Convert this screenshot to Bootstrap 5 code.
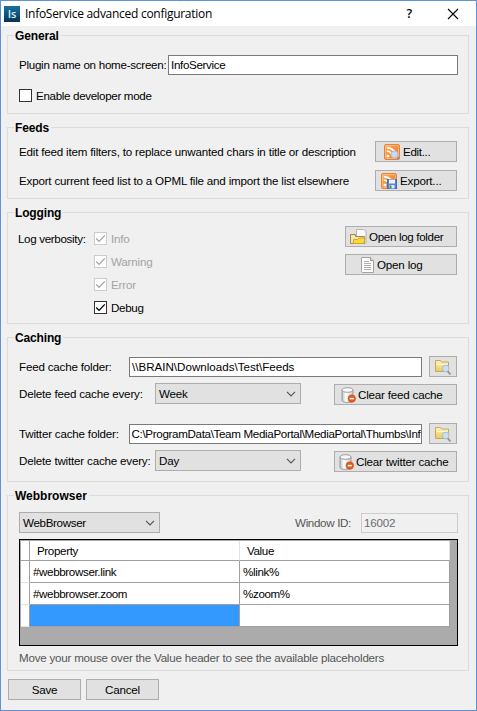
<!DOCTYPE html>
<html lang="en">
<head>
<meta charset="utf-8">
<title>InfoService advanced configuration</title>
<link href="https://cdn.jsdelivr.net/npm/bootstrap@5.3.0/dist/css/bootstrap.min.css" rel="stylesheet">
<style>
body{font-family:"Liberation Sans",Arial,sans-serif;font-size:11.6px;line-height:16px;letter-spacing:-.19px;color:#000;background:#f0f0f0}
.window{width:477px;height:711px;border:1px solid #5f93d8;background:#f0f0f0}
.titlebar{height:25px;padding:0 17px 0 3px}
.win-title{font-family:"Open Sans",sans-serif;font-size:12px;letter-spacing:-.28px;margin-left:5px}
.help{font:600 12.5px/16px "Open Sans",sans-serif;margin-right:35px}
.group{margin:13px 7px 0 6px;border:1px solid #dcdcdc;padding:0 11px}
.g-general{margin-top:9px;height:79px}
.g-feeds{height:72px}
.g-logging{height:112px}
.g-caching{height:145px}
.g-web{height:176px}
.legend{font-size:12px;font-weight:700;line-height:16px;width:max-content;letter-spacing:-.15px;margin:-8px 0 0 -5px;padding:0 2px 0 1px;background:#f0f0f0}
.field{height:20px;border:1px solid #7a7a7a;background:#fff;padding:1px 2px;white-space:nowrap;overflow:hidden;line-height:16px}
.field.off{border:1px solid #ccc;background:#f0f0f0;color:#6d6d6d;width:97px;margin-right:-1px}
.f-name{margin-right:-1px}
.wbtn{height:21px;border:1px solid #adadad;border-radius:0;background:#e1e1e1;color:#000;font-size:11.6px;line-height:17px;padding:1px 0;letter-spacing:inherit;gap:3px;white-space:nowrap}
.wbtn:hover{background:#e5f1fb;border-color:#0078d7}
.wbtn svg{flex:none}
.b-edit{width:82px;padding-left:8px}
.b-export{width:82px;padding-left:5px}
.b-logdir{width:112px;padding-left:4px;gap:2px}
.b-log{width:112px;padding-left:13px;gap:2px}
.b-clear1{width:123px;padding-left:6px;gap:1px}
.b-clear2{width:123px;padding-left:4px;gap:1px}
.b-browse{width:28px;margin-left:7px}
.b-foot{width:73px}
.wsel{height:21px;border:1px solid #adadad;background:#e1e1e1;padding:0 4px 0 3px}
.s-every{width:146px}
.s-web{width:141px}
.box{width:13px;height:13px;border:1px solid #333;background:#fff;flex:none}
.box svg{display:block}
.check{height:13px;gap:4px}
.off-check{color:#a3a3a3}
.off-check .box{border-color:#ccc}
.row-21{height:21px}
.name-row{margin-top:11px}
.dev-row{margin-top:14px}
.first-feed{margin-top:5px}
.log-label{width:76px;margin:10px 0 0 -1px}
.log-checks{gap:10px;margin-top:11px}
.log-btns{gap:7px;margin-top:5px}
.cache-1{margin-top:10px}
.cache-2{margin-top:6px}
.cache-3{margin-top:19px}
.cache-2 .wbtn{margin-top:2px}
.cache-2 .lbl-every{margin-top:1px}
.web-row{margin-top:8px}
.ls-tight{letter-spacing:-.33px}
.ls-none{letter-spacing:0}
.lbl-plugin{width:149px;letter-spacing:-.27px}
.lbl-folder{width:110px}
.lbl-every{width:136px}
.winid{color:#555;letter-spacing:-.33px;margin-right:10px}
.dgrid{width:439px;height:107px;margin-top:6px;border:1px solid #000;background:#ababab;padding:1px 0 0 1px}
.dgrid table{width:429px;table-layout:fixed;border-collapse:separate;border-spacing:0;background:#fff;letter-spacing:-.36px;line-height:16px}
.dgrid th,.dgrid td{padding:0 0 0 3px;height:22px;border-right:1px solid #a0a0a0;border-bottom:1px solid #a0a0a0;font-weight:400}
.dgrid th{height:20px;padding-left:7px;border-right-color:#e2e2e2}
.dgrid .rowhead{width:9px;padding:0;border-bottom-color:#e2e2e2;border-right-color:#a0a0a0}
.dgrid th.rowhead{border-bottom-color:#a0a0a0}
.dgrid .picked{background:#3399ff}
.c-head{width:9px}
.c-prop{width:210px}
.note{color:#555;letter-spacing:-.22px;margin-top:4px}
.foot{margin:8px 0 0 7px;gap:5px}
</style>
<script src="https://cdn.jsdelivr.net/npm/bootstrap@5.3.0/dist/js/bootstrap.bundle.min.js"></script>
</head>
<body>
<svg class="position-absolute" width="0" height="0" aria-hidden="true">
<defs>
<linearGradient id="org" x1="0" y1="0" x2="1" y2="1"><stop offset="0" stop-color="#ffab55"/><stop offset="1" stop-color="#f0761f"/></linearGradient>
<linearGradient id="yel" x1="0" y1="0" x2="0" y2="1"><stop offset="0" stop-color="#fff3b8"/><stop offset="1" stop-color="#ecc95a"/></linearGradient>
<linearGradient id="can" x1="0" y1="0" x2="1" y2="0"><stop offset="0" stop-color="#bdbdbd"/><stop offset=".35" stop-color="#fff"/><stop offset="1" stop-color="#c8c8c8"/></linearGradient>
<linearGradient id="blu" x1="0" y1="0" x2="0" y2="1"><stop offset="0" stop-color="#17749f"/><stop offset="1" stop-color="#063456"/></linearGradient>
</defs>
<symbol id="rss" viewBox="0 0 16 16"><rect x=".5" y=".5" width="15" height="15" rx="1.5" fill="url(#org)" stroke="#e8813a"/><rect x="1.5" y="1.5" width="13" height="13" rx="1" fill="none" stroke="#ffcf9c" stroke-opacity=".6"/><circle cx="4" cy="12" r="1.5" fill="#fff"/><path d="M2.8 7.2a6 6 0 0 1 6 6M2.8 3.6a9.6 9.6 0 0 1 9.6 9.6" fill="none" stroke="#fff" stroke-width="1.8"/></symbol>
<symbol id="folder" viewBox="0 0 16 16"><path d="M.5 12.5v-11h5l1 1.5h7v9.500z" fill="url(#yel)" stroke="#c2a860"/><path d="M1.500 5.500h11" stroke="#fffbd8"/><path d="m12.500 12.200 2.500 2.600" stroke="#9a9088" stroke-width="1.800" stroke-linecap="round"/><circle cx="10.700" cy="9.500" r="3.300" fill="#c5e1fb" fill-opacity=".93" stroke="#9dbfe2"/></symbol>
<symbol id="db" viewBox="0 0 16 16"><path d="M1 3.200v10c0 3 11 3 11 0v-10z" fill="url(#can)" stroke="#999"/><ellipse cx="6.500" cy="3" rx="5.500" ry="2.300" fill="#f8f8f8" stroke="#999"/><circle cx="10.800" cy="11.600" r="3.700" fill="#e65c1a" stroke="#c34a10" stroke-width=".7"/><path d="M8.700 11.600h4.200" stroke="#fff" stroke-width="1.500"/></symbol>
<symbol id="tick" viewBox="0 0 11 11"><path d="m1.200 5.500 2.900 2.900L9.800 2.400" fill="none" stroke="currentColor" stroke-width="1.300"/></symbol>
<symbol id="chev" viewBox="0 0 10 6"><path d="m1 .8 4 4 4-4" fill="none" stroke="#555" stroke-width="1.200"/></symbol>
</svg>

<main class="window d-flex flex-column overflow-hidden">
  <header class="titlebar d-flex align-items-center bg-white flex-shrink-0">
    <svg width="16" height="16" viewBox="0 0 16 16"><rect width="16" height="16" fill="url(#blu)"/><text x="8" y="12.300" text-anchor="middle" font-family="Open Sans" font-size="11" font-weight="600" letter-spacing="0" fill="#d9f0fa">Is</text></svg>
    <span class="win-title">InfoService advanced configuration</span>
    <span class="help ms-auto">?</span>
    <svg width="12" height="12" viewBox="0 0 12 12"><path d="m1 1 10 10M11 1 1 11" stroke="#000" stroke-width="1.100"/></svg>
  </header>

  <section class="group g-general">
    <h2 class="legend">General</h2>
    <div class="name-row d-flex align-items-center">
      <label class="lbl-plugin">Plugin name on home-screen:</label>
      <div class="field f-name flex-fill ls-tight">InfoService</div>
    </div>
    <div class="check dev-row d-flex align-items-center"><span class="box"></span><span class="ls-tight">Enable developer mode</span></div>
  </section>

  <section class="group g-feeds">
    <h2 class="legend">Feeds</h2>
    <div class="first-feed d-flex align-items-center justify-content-between"><span>Edit feed item filters, to replace unwanted chars in title or description</span>
      <button class="btn wbtn b-edit d-flex align-items-center"><svg width="16" height="16"><use href="#rss"/><path d="m13 13 2 2" stroke="#8c8c94" stroke-width="1.600"/><circle cx="10.500" cy="10.500" r="3.500" fill="#c5dcf4" stroke="#a3c0e2"/></svg><span class="ls-tight">Edit...</span></button></div>
    <div class="d-flex align-items-center justify-content-between mt-2"><span>Export current feed list to a OPML file and import the list elsewhere</span>
      <button class="btn wbtn b-export d-flex align-items-center"><svg width="16" height="16"><use href="#rss"/><rect x="6.500" y="6.500" width="9" height="9" fill="#5b84cf" stroke="#456cb5"/><rect x="8" y="6.500" width="6" height="4" fill="#eef4fd"/><rect x="8.500" y="12" width="5" height="3.500" fill="#dce5f4"/><rect x="9" y="12.500" width="1.500" height="3" fill="#3d8758"/></svg><span>Export...</span></button></div>
  </section>

  <section class="group g-logging">
    <h2 class="legend">Logging</h2>
    <div class="d-flex">
      <div class="log-label ls-tight">Log verbosity:</div>
      <div class="log-checks d-flex flex-column">
        <div class="check off-check d-flex align-items-center"><span class="box"><svg width="11" height="11"><use href="#tick"/></svg></span>Info</div>
        <div class="check off-check d-flex align-items-center"><span class="box"><svg width="11" height="11"><use href="#tick"/></svg></span>Warning</div>
        <div class="check off-check d-flex align-items-center"><span class="box"><svg width="11" height="11"><use href="#tick"/></svg></span>Error</div>
        <div class="check d-flex align-items-center"><span class="box"><svg width="11" height="11"><use href="#tick"/></svg></span><span class="ls-tight">Debug</span></div>
      </div>
      <div class="log-btns ms-auto d-flex flex-column">
        <button class="btn wbtn b-logdir d-flex align-items-center"><svg width="17" height="16" viewBox="0 0 17 16"><path d="M6.500 9V.5h7l2.500 2V14h-6z" fill="#fafafa" stroke="#b4b4b4"/><path d="M.5 14.500v-9h5v2h9v7z" fill="#f4e7ad" stroke="#a08a50"/><path d="M3.500 14.500v-4h4l1.500-1.500h6l-1 5.500z" fill="#ffd83a" stroke="#d2a728"/></svg><span class="ls-tight">Open log folder</span></button>
        <button class="btn wbtn b-log d-flex align-items-center"><svg width="16" height="16"><path d="M2.500.5h9l3 3v12h-11q-2-1-1-2z" fill="#fbfbfb" stroke="#a2a2a2"/><path d="M11.500.5v3h3" fill="#ddd" stroke="#999"/><path d="M5 4.500h5M5 6.500h7M5 8.500h7M5 10.500h7M5 12.500h7" stroke="#b0b0b0"/></svg><span>Open log</span></button>
      </div>
    </div>
  </section>

  <section class="group g-caching">
    <h2 class="legend">Caching</h2>
    <div class="cache-1 d-flex align-items-center row-21"><label class="lbl-folder">Feed cache folder:</label><div class="field flex-fill ls-none">\\BRAIN\Downloads\Test\Feeds</div>
      <button class="btn wbtn b-browse d-flex align-items-center justify-content-center"><svg width="16" height="16"><use href="#folder"/></svg></button></div>
    <div class="cache-2 d-flex align-items-center row-21"><label class="lbl-every">Delete feed cache every:</label>
      <div class="wsel s-every d-flex align-items-center justify-content-between"><span>Week</span><svg width="10" height="6"><use href="#chev"/></svg></div>
      <button class="btn wbtn b-clear1 ms-auto d-flex align-items-center"><svg width="16" height="16"><use href="#db"/></svg><span>Clear feed cache</span></button></div>
    <div class="cache-3 d-flex align-items-center row-21"><label class="lbl-folder">Twitter cache folder:</label><div class="field flex-fill ls-tight">C:\ProgramData\Team MediaPortal\MediaPortal\Thumbs\Inf</div>
      <button class="btn wbtn b-browse d-flex align-items-center justify-content-center"><svg width="16" height="16"><use href="#folder"/></svg></button></div>
    <div class="cache-2 d-flex align-items-center row-21"><label class="lbl-every mt-0">Delete twitter cache every:</label>
      <div class="wsel s-every d-flex align-items-center justify-content-between"><span>Day</span><svg width="10" height="6"><use href="#chev"/></svg></div>
      <button class="btn wbtn b-clear2 ms-auto d-flex align-items-center"><svg width="16" height="16"><use href="#db"/></svg><span>Clear twitter cache</span></button></div>
  </section>

  <section class="group g-web">
    <h2 class="legend ls-none">Webbrowser</h2>
    <div class="web-row d-flex align-items-center row-21">
      <div class="wsel s-web d-flex align-items-center justify-content-between"><span class="ls-tight">WebBrowser</span><svg width="10" height="6"><use href="#chev"/></svg></div>
      <span class="winid ms-auto">Window ID:</span><div class="field off">16002</div>
    </div>
    <div class="dgrid">
      <table>
        <colgroup><col class="c-head"><col class="c-prop"><col></colgroup>
        <tr><th class="rowhead"></th><th>Property</th><th>Value</th></tr>
        <tr><td class="rowhead"></td><td>#webbrowser.link</td><td>%link%</td></tr>
        <tr><td class="rowhead"></td><td>#webbrowser.zoom</td><td>%zoom%</td></tr>
        <tr><td class="rowhead"></td><td class="picked"></td><td></td></tr>
      </table>
    </div>
    <div class="note">Move your mouse over the Value header to see the available placeholders</div>
  </section>

  <footer class="foot d-flex">
    <button class="btn wbtn b-foot">Save</button>
    <button class="btn wbtn b-foot">Cancel</button>
  </footer>
</main>
</body>
</html>
